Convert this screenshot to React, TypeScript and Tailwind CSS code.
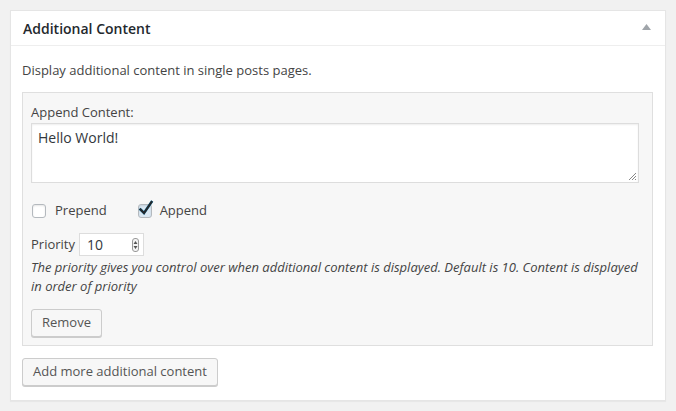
export default function App() {
  return (
    <div
      className="min-h-[411px] w-[676px] bg-[#f1f1f1] pt-[10px] pl-[10px] text-[13px] text-[#444]"
      style={{ fontFamily: '"Open Sans", "Liberation Sans", sans-serif' }}
    >
      <div className="w-[656px] h-[391px] border border-[#e5e5e5] bg-white shadow-[0_1px_1px_rgba(0,0,0,0.04)]">
        {/* header */}
        <div className="flex h-[35px] items-center justify-between border-b border-[#eee] pl-[12px] pr-[14px]">
          <h2 className="mt-[1px] text-[14px] font-semibold text-[#23282d]">Additional Content</h2>
          <svg width="9" height="6" viewBox="0 0 9 6" className="mt-[-2px]">
            <path d="M4.5 0 L9 6 L0 6 Z" fill="#a0a5aa" />
          </svg>
        </div>

        <div className="px-[11px] pt-[11px]">
          <p className="leading-[26px]">Display additional content in single posts pages.</p>

          <div className="mt-[9px] w-[631px] border border-[#dfdfdf] bg-[#f7f7f7] px-[8px] pt-[9px] pb-[8px]">
            <label className="block leading-[20px]">Append Content:</label>
            <div className="relative mt-[1px] h-[60px] w-[608px] border border-[#ddd] bg-white px-[6px] pt-[3px] text-[14px] text-[#32373c] shadow-[inset_0_1px_2px_rgba(0,0,0,0.07)]">
              Hello World!
              <svg width="9" height="9" viewBox="0 0 9 9" className="absolute right-[1px] bottom-[1px]">
                <path d="M8 1 L1 8 M8 4 L4 8 M8 7 L7 8" stroke="#888" strokeWidth="1" />
              </svg>
            </div>

            <div className="mt-[18px] flex items-center h-[20px]">
              <span className="h-[14px] w-[14px] rounded-[3px] border border-[#b4b9be] bg-white shadow-[inset_0_1px_2px_rgba(0,0,0,0.1)] ml-[1px]" />
              <span className="ml-[9px]">Prepend</span>
              <span className="relative ml-[31px] h-[14px] w-[14px] rounded-[3px] border border-[#b4b9be] bg-[#dbe8f3] shadow-[inset_0_1px_2px_rgba(0,0,0,0.1)]">
                <svg width="16" height="16" viewBox="0 0 16 16" className="absolute left-[-1px] top-[-5px]">
                  <path d="M2.5 9.5 L6 13 L13.5 2" stroke="#1e8cbe" strokeWidth="2.6" fill="none" strokeLinecap="square" />
                  <path d="M2.5 9.5 L6 13 L13.5 2" stroke="#23282d" strokeWidth="2.2" fill="none" strokeLinecap="square" />
                </svg>
              </span>
              <span className="ml-[8px]">Append</span>
            </div>

            <div className="mt-[12px] flex items-center">
              <span className="mr-[4px]">Priority</span>
              <div className="flex h-[23px] w-[65px] items-center justify-between border border-[#ddd] bg-white pl-[7px] pr-[4px] text-[14px] text-[#32373c]">
                <span>10</span>
                <span className="flex h-[14px] w-[7px] flex-col items-center justify-center rounded-[3px] border border-[#999] bg-[#f4f4f4]">
                  <svg width="5" height="10" viewBox="0 0 5 10">
                    <path d="M2.5 1 L4.5 4 L0.5 4 Z M2.5 9 L4.5 6 L0.5 6 Z" fill="#555" />
                  </svg>
                </span>
              </div>
            </div>
            <p className="mt-[2px] italic leading-[19px]">
              The priority gives you control over when additional content is displayed. Default is 10. Content is displayed in order of priority
            </p>

            <button className="mt-[13px] h-[28px] rounded-[3px] border border-[#ccc] bg-[#f7f7f7] px-[10px] text-[13px] text-[#555] shadow-[0_1px_0_#ccc]">
              Remove
            </button>
          </div>

          <button className="mt-[12px] h-[28px] rounded-[3px] border border-[#ccc] bg-[#f7f7f7] px-[10px] text-[13px] text-[#555] shadow-[0_1px_0_#ccc]">
            Add more additional content
          </button>
        </div>
      </div>
    </div>
  );
}
